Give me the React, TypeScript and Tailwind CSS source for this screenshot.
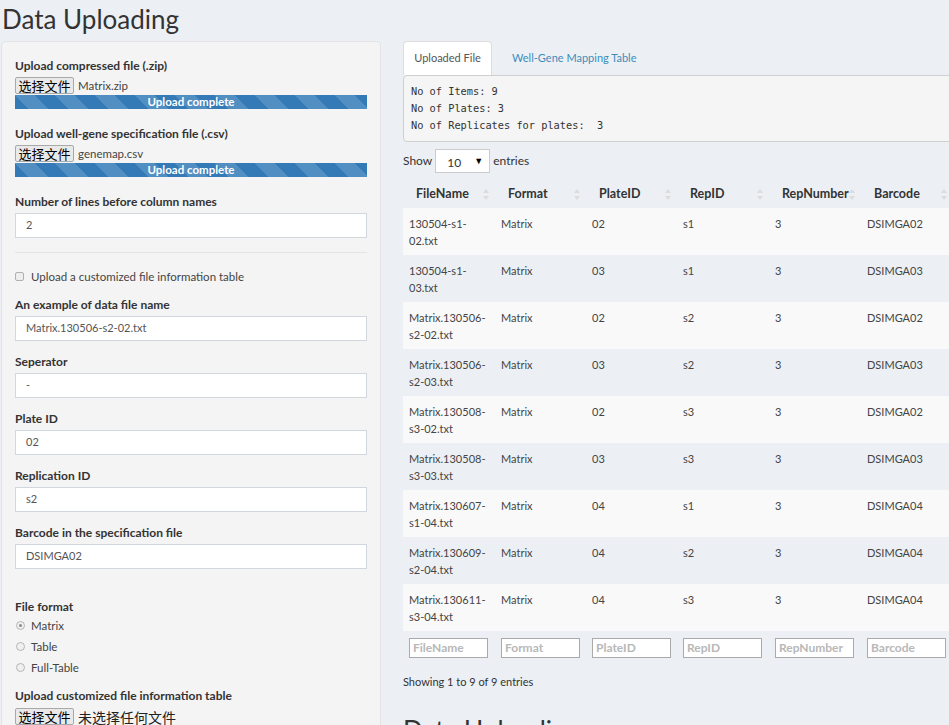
import React from "react";

const rows = [
  ["130504-s1-02.txt", "Matrix", "02", "s1", "3", "DSIMGA02"],
  ["130504-s1-03.txt", "Matrix", "03", "s1", "3", "DSIMGA03"],
  ["Matrix.130506-s2-02.txt", "Matrix", "02", "s2", "3", "DSIMGA02"],
  ["Matrix.130506-s2-03.txt", "Matrix", "03", "s2", "3", "DSIMGA03"],
  ["Matrix.130508-s3-02.txt", "Matrix", "02", "s3", "3", "DSIMGA02"],
  ["Matrix.130508-s3-03.txt", "Matrix", "03", "s3", "3", "DSIMGA03"],
  ["Matrix.130607-s1-04.txt", "Matrix", "04", "s1", "3", "DSIMGA04"],
  ["Matrix.130609-s2-04.txt", "Matrix", "04", "s2", "3", "DSIMGA04"],
  ["Matrix.130611-s3-04.txt", "Matrix", "04", "s3", "3", "DSIMGA04"],
];

const cols = ["FileName", "Format", "PlateID", "RepID", "RepNumber", "Barcode"];

function splitName(n: string): [string, string] {
  const i = n.indexOf("-");
  if (n.startsWith("Matrix")) {
    return [n.slice(0, i + 1), n.slice(i + 1)];
  }
  const j = n.indexOf("-", i + 1);
  return [n.slice(0, j + 1), n.slice(j + 1)];
}

function SortIcon() {
  return (
    <svg width="6" height="11" viewBox="0 0 6 11" className="shrink-0">
      <path d="M3 0 L6 4 L0 4 Z" fill="#dcdcdc" />
      <path d="M0 7 L6 7 L3 11 Z" fill="#dcdcdc" />
    </svg>
  );
}

function FileBtn({ name, dark }: { name: string; dark?: boolean }) {
  return (
    <div className="flex items-center h-[17px]">
      <span className="h-[17px] w-[59px] border border-[#a9a9a9] bg-[#e9e9e9] rounded-[2px] flex items-center justify-center text-[13px] leading-none text-black font-['Noto_Sans_CJK_SC',sans-serif]">
        选择文件
      </span>
      <span
        className={
          dark
            ? "ml-[4px] text-[14px] leading-none text-[#222] font-['Noto_Sans_CJK_SC',sans-serif]"
            : "ml-[4px] text-[11.5px] leading-none text-[#444]"
        }
      >
        {name}
      </span>
    </div>
  );
}

function Progress() {
  return (
    <div className="mt-[1px] h-[14px] w-full bg-[#337ab7] bg-[linear-gradient(45deg,rgba(255,255,255,.15)_25%,transparent_25%,transparent_50%,rgba(255,255,255,.15)_50%,rgba(255,255,255,.15)_75%,transparent_75%,transparent)] bg-[length:40px_40px] flex items-center justify-center text-white text-[11.5px] font-bold leading-none">
      Upload complete
    </div>
  );
}

function Label({ children, className }: { children: React.ReactNode; className?: string }) {
  return (
    <div className={"text-[12px] font-bold text-[#333] leading-[17px] " + (className || "")}>
      {children}
    </div>
  );
}

function TextInput({ value }: { value: string }) {
  return (
    <div className="mt-[3px] h-[25px] w-full bg-white border border-[#d2d6de] flex items-center pl-[10px] text-[11px] text-[#555]">
      {value}
    </div>
  );
}

function Radio({ checked, label }: { checked?: boolean; label: string }) {
  return (
    <div className="flex items-center h-[21px]">
      <span className="ml-[1px] w-[9px] h-[9px] rounded-full border border-[#b5b5b5] bg-[#f0f0f0] flex items-center justify-center">
        {checked && <span className="w-[3px] h-[3px] rounded-full bg-[#8a8a8a]" />}
      </span>
      <span className="ml-[6px] text-[11.5px] text-[#444]">{label}</span>
    </div>
  );
}

export default function App() {
  return (
    <div className="w-[949px] h-[725px] overflow-hidden bg-[#ecf0f5] font-['Lato',sans-serif] text-[#333]">
      <h1 className="h-[41px] pl-[2px] pt-[2px] text-[26px] leading-[34px] text-[#333] font-normal">
        Data Uploading
      </h1>
      <div className="flex">
        {/* Sidebar */}
        <div className="ml-[1px] w-[380px] shrink-0 h-[700px] bg-[#f4f4f4] border border-[#e3e3e3] rounded-[4px] px-[13px] pt-[15px]">
          <Label>Upload compressed file (.zip)</Label>
          <div className="mt-[3px]">
            <FileBtn name="Matrix.zip" />
          </div>
          <Progress />

          <Label className="mt-[16px]">Upload well-gene specification file (.csv)</Label>
          <div className="mt-[3px]">
            <FileBtn name="genemap.csv" />
          </div>
          <Progress />

          <Label className="mt-[16px]">Number of lines before column names</Label>
          <TextInput value="2" />

          <div className="mt-[14px] h-px bg-[#e4e4e4]" />

          <div className="mt-[15px] flex items-center h-[17px]">
            <span className="w-[9px] h-[9px] border border-[#b0b0b0] bg-[#eee] rounded-[2px]" />
            <span className="ml-[7px] text-[11.5px] text-[#444]">Upload a customized file information table</span>
          </div>

          <Label className="mt-[11px]">An example of data file name</Label>
          <TextInput value="Matrix.130506-s2-02.txt" />

          <Label className="mt-[12px]">Seperator</Label>
          <TextInput value="-" />

          <Label className="mt-[12px]">Plate ID</Label>
          <TextInput value="02" />

          <Label className="mt-[12px]">Replication ID</Label>
          <TextInput value="s2" />

          <Label className="mt-[12px]">Barcode in the specification file</Label>
          <TextInput value="DSIMGA02" />

          <Label className="mt-[29px]">File format</Label>
          <div className="mt-0">
            <Radio checked label="Matrix" />
            <Radio label="Table" />
            <Radio label="Full-Table" />
          </div>

          <Label className="mt-[9px]">Upload customized file information table</Label>
          <div className="mt-[4px]">
            <FileBtn name="未选择任何文件" dark />
          </div>
        </div>

        {/* Main */}
        <div className="ml-[22px] w-[560px] shrink-0">
          <div className="flex items-end h-[34px]">
            <div className="h-[34px] w-[89px] bg-white border border-[#ddd] border-b-0 rounded-t-[4px] flex items-center justify-center text-[11px] text-[#555]">
              Uploaded File
            </div>
            <div className="ml-[20px] h-[34px] flex items-center text-[11px] text-[#3c8dbc]">
              Well-Gene Mapping Table
            </div>
          </div>
          <div className="h-[67px] bg-[#f5f5f5] border border-[#cfcfcf] rounded-[4px] px-[7px] pt-[7px] font-['DejaVu_Sans_Mono',monospace] text-[10.3px] leading-[17px] text-[#333] whitespace-pre">
            <div>No of Items: 9</div>
            <div>No of Plates: 3</div>
            <div>No of Replicates for plates:  3</div>
          </div>

          <div className="mt-[6px] flex items-center h-[25px] text-[12px] text-[#333]">
            <span>Show</span>
            <div className="ml-[3px] w-[55px] h-[24px] bg-white border border-[#ccc] flex items-end justify-between pl-[11px] pr-[6px] pb-[3px]">
              <span className="text-[12px] leading-none">10</span>
              <span className="text-[9px] leading-none mb-[4px] text-black">▼</span>
            </div>
            <span className="ml-[3px]">entries</span>
          </div>

          <table className="mt-[7px] table-fixed border-collapse w-[550px] text-[11px]">
            <colgroup>
              <col className="w-[92px]" />
              <col className="w-[91px]" />
              <col className="w-[91px]" />
              <col className="w-[92px]" />
              <col className="w-[92px]" />
              <col className="w-[92px]" />
            </colgroup>
            <thead>
              <tr className="h-[28px]">
                {cols.map((c) => (
                  <th key={c} className="p-0 font-bold text-[12.5px] text-[#333] text-left">
                    <div className="flex items-center justify-between pl-[13px] pr-[6px]">
                      <span>{c}</span>
                      <SortIcon />
                    </div>
                  </th>
                ))}
              </tr>
            </thead>
            <tbody>
              {rows.map((r, i) => {
                const [a, b] = splitName(r[0]);
                return (
                  <tr key={i} className={i % 2 === 0 ? "h-[47px] bg-[#f9f9f9]" : "h-[47px]"}>
                    <td className="align-top pt-[7px] pl-[6px] leading-[17px] text-[#444]">
                      <div>{a}</div>
                      <div>{b}</div>
                    </td>
                    {r.slice(1).map((v, k) => (
                      <td key={k} className="align-top pt-[7px] pl-[6px] leading-[17px] text-[#444]">
                        {v}
                      </td>
                    ))}
                  </tr>
                );
              })}
              <tr className="h-[32px]">
                {cols.map((c) => (
                  <td key={c} className="align-top pt-[7px] pl-[6px]">
                    <div className="w-[79px] h-[20px] bg-white border border-[#aaa] flex items-center pl-[3px] text-[12px] font-bold text-[#b8b8b8]">
                      {c}
                    </div>
                  </td>
                ))}
              </tr>
            </tbody>
          </table>

          <div className="mt-[11px] text-[11px] text-[#333]">Showing 1 to 9 of 9 entries</div>
          <div className="mt-[22px] text-[26px] leading-[34px] text-[#333]">Data Uploading summary</div>
        </div>
      </div>
    </div>
  );
}
